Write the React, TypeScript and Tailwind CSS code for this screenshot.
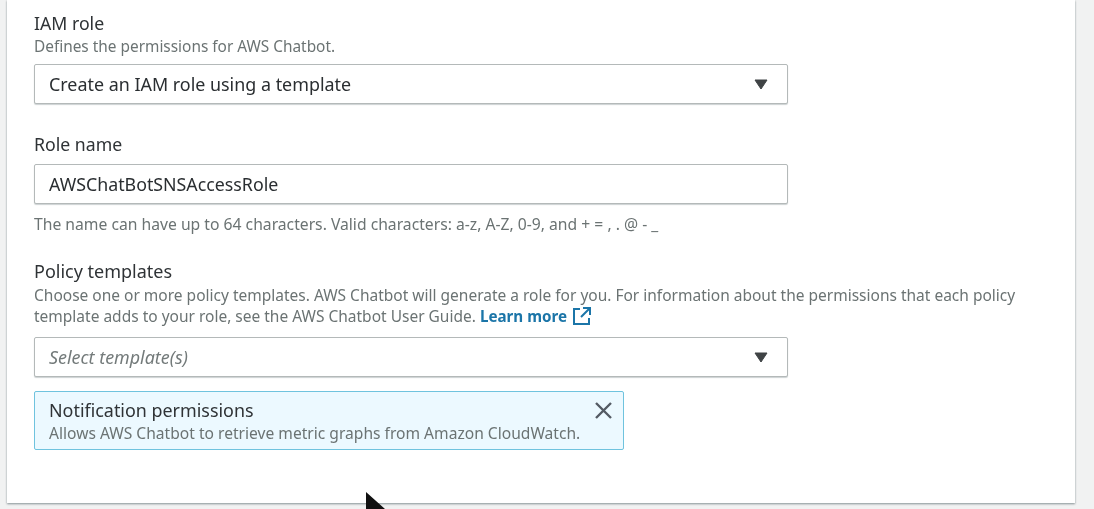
import React from 'react';

const Caret = () => (
    <svg width="14" height="11" viewBox="0 0 14 11" className="text-[#3f4345]">
        <path d="M1 1h12L7 10z" fill="currentColor" stroke="currentColor" strokeWidth="1" strokeLinejoin="round" />
    </svg>
);

const Select = ({ text, placeholder }: { text: string; placeholder?: boolean }) => (
    <div className="flex h-[40px] w-[754px] items-center justify-between rounded-[2px] border border-[#b4b9b9] bg-white pl-[14px] pr-[19px] shadow-[0_1px_1px_rgba(0,28,36,0.2)]">
        <span className={placeholder ? 'text-[17.9px] italic text-[#737a7a]' : 'text-[17.9px] text-[#2a2e31]'}>{text}</span>
        <Caret />
    </div>
);

const App = () => {
    return (
        <div className="relative h-[509px] w-[1094px] overflow-hidden bg-[#f1f2f2] font-['Noto_Sans',sans-serif] blur-[0.6px]">
            <div className="ml-[7px] h-[503px] w-[1068px] bg-white pl-[27px] pt-[12px] shadow-[0_1px_2px_rgba(0,28,36,0.45)]">
                <p className="text-[17.7px] leading-[23px] text-[#2f3336]">IAM role</p>
                <p className="mb-[7px] mt-[2px] text-[15.4px] leading-[20px] text-[#6b7373]">Defines the permissions for AWS Chatbot.</p>
                <Select text="Create an IAM role using a template" />

                <p className="mt-[29px] text-[17.7px] leading-[23px] text-[#2f3336]">Role name</p>
                <div className="mt-[8px] flex h-[40px] w-[754px] items-center rounded-[2px] border border-[#b4b9b9] bg-white pl-[14px] text-[17.8px] text-[#2a2e31] shadow-[0_1px_1px_rgba(0,28,36,0.2)]">
                    AWSChatBotSNSAccessRole
                </div>
                <p className="mt-[10px] whitespace-nowrap text-[15.7px] leading-[20px] text-[#6b7373]">
                    The name can have up to 64 characters. Valid characters: a-z, A-Z, 0-9, and + = , . @ - _
                </p>

                <p className="mt-[26px] text-[18px] leading-[23px] text-[#2f3336]">Policy templates</p>
                <p className="mt-[2px] w-[1000px] text-[15.5px] leading-[21px] text-[#6b7373]">
                    Choose one or more policy templates. AWS Chatbot will generate a role for you. For information about the permissions that each policy template adds to your role, see the AWS Chatbot User Guide.{' '}
                    <span className="text-[15.2px] font-bold text-[#1b75a8]">Learn more</span>{' '}
                    <svg width="20" height="20" viewBox="0 0 20 20" fill="none" stroke="#1b75a8" strokeWidth="2" className="ml-[1px] inline-block align-[-4px]">
                        <path d="M8 3H2v15h15v-6M11 2h7v7M18 2l-9 9" />
                    </svg>
                </p>
                <div className="mt-[10px]">
                    <Select text="Select template(s)" placeholder />
                </div>
                <div className="mt-[14px] flex h-[59px] w-[590px] justify-between rounded-[2px] border border-[#6fc3de] bg-[#ecf9ff] pl-[14px] pr-[10px]">
                    <div className="pt-[7px]">
                        <p className="text-[17.9px] leading-[23px] text-[#2f3336]">Notification permissions</p>
                        <p className="mt-[1px] whitespace-nowrap text-[15.6px] leading-[20px] text-[#6b7373]">Allows AWS Chatbot to retrieve metric graphs from Amazon CloudWatch.</p>
                    </div>
                    <svg width="19" height="19" viewBox="0 0 19 19" className="mt-[9px]" stroke="#545b64" strokeWidth="2.4" fill="none">
                        <path d="M2 2l15 15M17 2L2 17" />
                    </svg>
                </div>
            </div>
            <svg width="26" height="30" viewBox="0 0 26 30" className="absolute left-[365px] top-[491px]">
                <path d="M1 1v24l6-5 4 9 5-2-4-9h8z" fill="#111" />
            </svg>
        </div>
    );
};

export default App;
